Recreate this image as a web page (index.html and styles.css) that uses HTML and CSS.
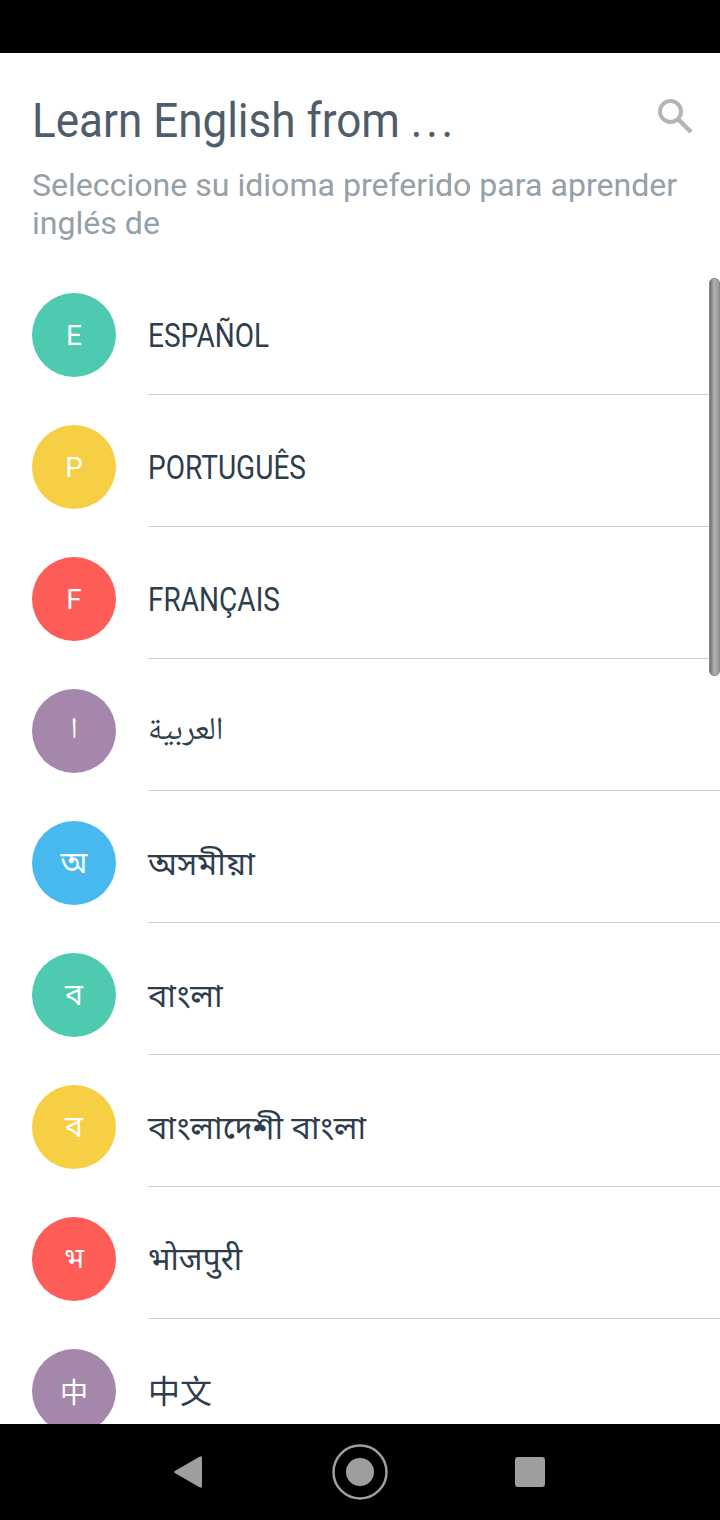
FILE: index.html
```html
<!DOCTYPE html>
<html lang="en">
<head>
    <meta charset="UTF-8">
    <title>Learn English from ...</title>
    <link rel="stylesheet" href="styles.css">
</head>
<body>
    <div class="statusbar"></div>
    <div class="screen">
        <div class="header">
            <div class="title-row">
                <h1 class="title">Learn English from <span class="dots">...</span></h1>
                <svg class="search" width="36" height="36" viewBox="0 0 36 36">
                    <circle cx="12.5" cy="12.5" r="10.5" fill="none" stroke="#b4b4b4" stroke-width="4"/>
                    <path d="M20.5 20.5L33 33" stroke="#b4b4b4" stroke-width="4.5" fill="none"/>
                </svg>
            </div>
            <p class="subtitle">Seleccione su idioma preferido para aprender inglés de</p>
        </div>
        <ul class="list">
            <li class="row"><span class="dot green">E</span><span class="name"><span class="cond">ESPAÑOL</span></span></li>
            <li class="row"><span class="dot yellow">P</span><span class="name"><span class="cond">PORTUGUÊS</span></span></li>
            <li class="row"><span class="dot red">F</span><span class="name"><span class="cond">FRANÇAIS</span></span></li>
            <li class="row"><span class="dot purple arabic" lang="ar">ا</span><span class="name arabic" lang="ar">العربية</span></li>
            <li class="row"><span class="dot blue beng" lang="as">অ</span><span class="name beng" lang="as">অসমীয়া</span></li>
            <li class="row"><span class="dot green beng" lang="bn">ব</span><span class="name beng" lang="bn">বাংলা</span></li>
            <li class="row"><span class="dot yellow beng" lang="bn">ব</span><span class="name beng" lang="bn">বাংলাদেশী বাংলা</span></li>
            <li class="row"><span class="dot red deva" lang="bho">भ</span><span class="name deva" lang="bho">भोजपुरी</span></li>
            <li class="row"><span class="dot purple" lang="zh">中</span><span class="name cjk" lang="zh">中文</span></li>
        </ul>
        <div class="scrollbar"></div>
    </div>
    <div class="navbar">
        <svg class="nav-back" width="28" height="32" viewBox="0 0 28 32"><path d="M25.500 .8L.8 15Q-.3 16 .8 17L25.500 31.200Q28 32.500 28 30V2Q28 -.5 25.500 .8Z" fill="#9e9e9e"/></svg>
        <svg class="nav-home" width="56" height="56" viewBox="0 0 56 56"><circle cx="28" cy="28" r="26.500" fill="none" stroke="#9e9e9e" stroke-width="2.500"/><circle cx="28" cy="28" r="14" fill="#9e9e9e"/></svg>
        <svg class="nav-recent" width="30" height="30" viewBox="0 0 30 30"><rect width="30" height="30" rx="3" fill="#9e9e9e"/></svg>
    </div>
</body>
</html>
```

FILE: styles.css
```css
*{
    margin: 0px;
    padding: 0px;
    box-sizing: border-box;
}
body
{
    width: 720px;
    height: 1520px;
    overflow: hidden;
    background: #ffffff;
    font-family: Roboto, "Noto Sans", "Noto Sans CJK SC", "DejaVu Sans", sans-serif;
    display: flex;
    flex-direction: column;
}
.statusbar
{
    height: 53px;
    background: #000000;
}
.screen
{
    height: 1371px;
    overflow: hidden;
    position: relative;
}
.header
{
    padding: 36px 26px 0px 32px;
}
.title-row
{
    display: flex;
    justify-content: space-between;
    align-items: flex-start;
}
.title
{
    font-size: 48px;
    line-height: 64px;
    font-weight: 400;
    color: #4f5d6b;
    white-space: nowrap;
    transform: scaleX(0.917);
    transform-origin: left center;
}
.dots
{
    letter-spacing: 4px;
}
.search
{
    margin-top: 10px;
}
.subtitle
{
    margin-top: 13px;
    font-size: 32.1px;
    line-height: 38px;
    color: #95a0a8;
    height: 82px;
}
.list
{
    list-style: none;
    margin-top: 15px;
}
.row
{
    height: 132px;
    padding: 30px 0px 0px 32px;
    display: flex;
    align-items: flex-start;
}
.dot
{
    width: 84px;
    height: 84px;
    flex: none;
    border-radius: 50%;
    color: #ffffff;
    font-size: 28px;
    display: flex;
    align-items: center;
    justify-content: center;
}
.green { background: #4dcab0; }
.yellow { background: #f7cf45; }
.red { background: #fd5c57; }
.purple { background: #a587ac; }
.blue { background: #47b9ee; }
.name
{
    flex: 1;
    height: 102px;
    margin-left: 32px;
    border-bottom: 1px solid #cfcfcf;
    font-size: 33px;
    line-height: 86px;
    color: #2e3d4c;
    white-space: nowrap;
}
.cond
{
    display: inline-block;
    transform: scaleX(0.85);
    transform-origin: left center;
}
.arabic
{
    font-family: "Noto Naskh Arabic", "Liberation Serif", "DejaVu Sans", serif;
}
.name.arabic
{
    font-size: 32px;
}
.dot.arabic
{
    font-size: 30px;
}
.beng
{
    font-family: "Noto Sans Bengali", "Noto Sans", sans-serif;
}
.name.beng
{
    font-size: 32.5px;
    line-height: 91px;
}
.dot.beng
{
    font-size: 30px;
    padding-top: 4px;
}
.deva
{
    font-family: "Noto Sans Devanagari", "Noto Sans", sans-serif;
}
.name.deva
{
    font-size: 32px;
    line-height: 90px;
}
.dot.deva
{
    padding-top: 4px;
}
.cjk
{
    font-size: 32px;
}
.scrollbar
{
    position: absolute;
    right: 0px;
    top: 225px;
    width: 11px;
    height: 398px;
    border-radius: 5px;
    border: 1px solid #8a8a8a;
    background: linear-gradient(to right, #6e6e6e, #b0b0b0 45%, #9a9a9a);
}
.navbar
{
    height: 96px;
    background: #000000;
    display: flex;
    align-items: center;
}
.nav-back
{
    margin-left: 174px;
}
.nav-home
{
    margin-left: 130px;
}
.nav-recent
{
    margin-left: 127px;
}
```
